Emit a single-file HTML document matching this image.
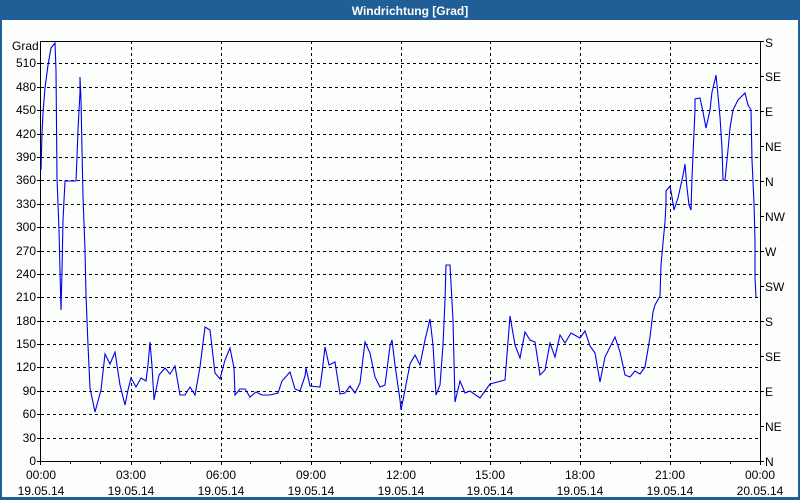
<!DOCTYPE html>
<html><head><meta charset="utf-8"><style>
html,body{margin:0;padding:0;background:#fff;}
body{width:800px;height:500px;overflow:hidden;position:relative;font-family:"Liberation Sans",sans-serif;}
</style></head><body>
<svg width="800" height="500" viewBox="0 0 800 500" xmlns="http://www.w3.org/2000/svg" style="position:absolute;left:0;top:0">
<rect x="0" y="0" width="800" height="500" fill="#fcfefc"/>
<rect x="0" y="0" width="800" height="20" fill="#1f5f96"/>
<rect x="0" y="0" width="2" height="500" fill="#1f5f96"/>
<rect x="798" y="0" width="2" height="500" fill="#1f5f96"/>
<rect x="0" y="497" width="800" height="3" fill="#1f5f96"/>
<text x="410" y="15" fill="#fff" font-size="12" font-weight="bold" text-anchor="middle" font-family="Liberation Sans, sans-serif">Windrichtung [Grad]</text>
<g stroke="#000" stroke-width="1" stroke-dasharray="3,3" fill="none" shape-rendering="crispEdges">
<path d="M131.5 41V461M221.5 41V461M311.5 41V461M401.5 41V461M490.5 41V461M580.5 41V461M670.5 41V461"/>
<path d="M41 63.5H760M41 87.5H760M41 110.5H760M41 134.5H760M41 157.5H760M41 180.5H760M41 204.5H760M41 227.5H760M41 251.5H760M41 274.5H760M41 297.5H760M41 321.5H760M41 344.5H760M41 367.5H760M41 391.5H760M41 414.5H760M41 438.5H760"/>
</g>
<g stroke="#000" stroke-width="1" fill="none" shape-rendering="crispEdges">
<path d="M40.5 41V461.5H760.5V41M40.5 41.5H760.5"/>
<path d="M37 63.5H41M37 87.5H41M37 110.5H41M37 134.5H41M37 157.5H41M37 180.5H41M37 204.5H41M37 227.5H41M37 251.5H41M37 274.5H41M37 297.5H41M37 321.5H41M37 344.5H41M37 367.5H41M37 391.5H41M37 414.5H41M37 438.5H41M37 461.5H41"/>
<path d="M760 41.5H764M760 76.5H764M760 111.5H764M760 146.5H764M760 181.5H764M760 216.5H764M760 251.5H764M760 286.5H764M760 321.5H764M760 356.5H764M760 391.5H764M760 426.5H764M760 461.5H764"/>
<path d="M40.5 461V465M70.5 461V464M100.5 461V464M131.5 461V465M160.5 461V464M190.5 461V464M221.5 461V465M250.5 461V464M280.5 461V464M311.5 461V465M340.5 461V464M370.5 461V464M401.5 461V465M430.5 461V464M460.5 461V464M490.5 461V465M520.5 461V464M550.5 461V464M580.5 461V465M610.5 461V464M640.5 461V464M670.5 461V465M700.5 461V464M730.5 461V464M760.5 461V465"/>
</g>
<polyline fill="none" stroke="#0000ee" stroke-width="1.1" points="41,170 42,133 43,113 45,88 48,65 51,48 55,43 56,70 57,178 59,230 61,310 62,272 63,220 65,181 76,181 77,157 78,130 80,92 80,77 81,100 82,150 83,197 85,250 86,295 88,345 90,388 95,412 101,390 105,354 110,364 115,352 120,385 125,405 128,390 131,378 136,387 141,378 146,381 148,365 150,342 152,366 154,400 159,375 165,368 170,374 175,366 180,395 185,395 190,387 195,395 200,367 205,327 210,330 215,373 220,379 225,360 230,348 234,368 235,395 240,389 245,389 250,397 256,392 262,395 270,395 278,393 282,381 290,372 295,389 300,391 305,376 306,368 310,386 320,387 322,373 325,347 329,365 335,362 340,394 345,393 350,386 355,393 360,383 365,342 370,353 375,377 380,387 385,385 390,346 392,340 395,365 400,400 401,410 405,390 410,364 415,355 420,365 425,340 430,319 433,345 436,395 440,385 443,345 445,300 446,265 450,265 453,320 455,402 460,381 465,393 470,391 480,398 490,384 505,380 510,316 515,345 520,358 525,332 530,340 535,342 540,375 545,370 550,343 555,357 560,335 565,343 571,333 580,338 585,331 590,346 595,353 600,382 605,357 615,337 620,352 625,375 630,377 635,371 640,374 645,367 650,337 653,312 655,305 660,296 661,265 663,243 665,222 666,203 666,191 670,186 672,197 674,210 678,198 682,180 684,170 685,164 687,188 689,205 691,210 692,178 693,155 695,110 695,99 700,98 703,112 706,128 710,110 712,92 715,80 716,75 717,85 720,117 722,148 723,180 725,180 728,150 730,128 733,110 738,100 745,93 748,105 751,110 752,160 754,203 755,240 755,278 756,297"/>
<g font-size="12" fill="#000" font-family="Liberation Sans, sans-serif">
<text x="12" y="50">Grad</text>
<g text-anchor="end">
<text x="36" y="67">510</text><text x="36" y="91">480</text><text x="36" y="114">450</text><text x="36" y="138">420</text><text x="36" y="161">390</text><text x="36" y="184">360</text><text x="36" y="208">330</text><text x="36" y="231">300</text><text x="36" y="255">270</text><text x="36" y="278">240</text><text x="36" y="301">210</text><text x="36" y="325">180</text><text x="36" y="348">150</text><text x="36" y="371">120</text><text x="36" y="395">90</text><text x="36" y="418">60</text><text x="36" y="442">30</text><text x="36" y="465">0</text>
</g>
<g>
<text x="765" y="47">S</text><text x="765" y="81">SE</text><text x="765" y="116">E</text><text x="765" y="151">NE</text><text x="765" y="186">N</text><text x="765" y="221">NW</text><text x="765" y="256">W</text><text x="765" y="291">SW</text><text x="765" y="326">S</text><text x="765" y="361">SE</text><text x="765" y="396">E</text><text x="765" y="431">NE</text><text x="765" y="466">N</text>
</g>
<g text-anchor="middle">
<text x="41" y="479">00:00</text><text x="41" y="495">19.05.14</text>
<text x="131" y="479">03:00</text><text x="131" y="495">19.05.14</text>
<text x="221" y="479">06:00</text><text x="221" y="495">19.05.14</text>
<text x="311" y="479">09:00</text><text x="311" y="495">19.05.14</text>
<text x="401" y="479">12:00</text><text x="401" y="495">19.05.14</text>
<text x="490" y="479">15:00</text><text x="490" y="495">19.05.14</text>
<text x="580" y="479">18:00</text><text x="580" y="495">19.05.14</text>
<text x="670" y="479">21:00</text><text x="670" y="495">19.05.14</text>
<text x="760" y="479">00:00</text><text x="760" y="495">20.05.14</text>
</g>
</g>
</svg>
</body></html>
